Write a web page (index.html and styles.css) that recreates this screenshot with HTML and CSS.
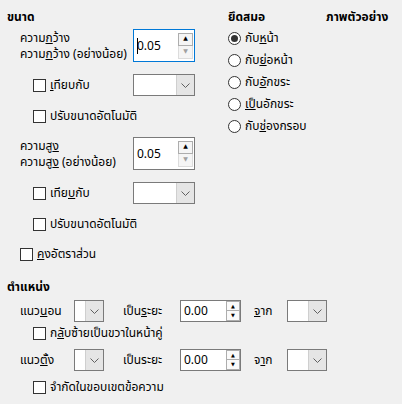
FILE: index.html
```html
<!DOCTYPE html>
<html lang="th">
<head>
<meta charset="utf-8">
<link rel="stylesheet" href="styles.css">
</head>
<body>
<div class="dialog">
  <div class="top">
    <section class="size">
      <h3>ขนาด</h3>
      <div class="field f-first">
        <div class="labels"><div>ความ<u>ก</u>ว้าง</div><div>ความ<u>ก</u>ว้าง (อย่างน้อย)</div></div>
        <div class="spin focus"><span class="caret"></span><span class="val">0.05</span>
          <div class="btns"><span class="up">&#9650;</span><span class="down">&#9660;</span></div>
        </div>
      </div>
      <div class="row indent r-dd1">
        <span class="chk"></span><span class="clabel"><u>เ</u>ทียบกับ</span>
        <div class="dd"><span class="dd-btn"><svg width="9" height="5" viewBox="0 0 9 5"><path d="M0.5 0.5 L4.5 4.5 L8.5 0.5" fill="none" stroke="#606060" stroke-width="1"/></svg></span></div>
      </div>
      <div class="row indent r-auto1"><span class="chk"></span><span>ปรับขนาดอัตโนมัติ</span></div>
      <div class="field f-second">
        <div class="labels"><div>ความสู<u>ง</u></div><div>ความสู<u>ง</u> (อย่างน้อย)</div></div>
        <div class="spin"><span class="val">0.05</span>
          <div class="btns"><span class="up">&#9650;</span><span class="down">&#9660;</span></div>
        </div>
      </div>
      <div class="row indent r-dd2">
        <span class="chk"></span><span class="clabel">เทีย<u>บ</u>กับ</span>
        <div class="dd"><span class="dd-btn"><svg width="9" height="5" viewBox="0 0 9 5"><path d="M0.5 0.5 L4.5 4.5 L8.5 0.5" fill="none" stroke="#606060" stroke-width="1"/></svg></span></div>
      </div>
      <div class="row indent r-auto2"><span class="chk"></span><span>ปรับขนาดอัตโนมัติ</span></div>
      <div class="row half r-keep"><span class="chk"></span><span><u>ค</u>งอัตราส่วน</span></div>
    </section>
    <section class="anchor">
      <h3>ยึดสมอ</h3>
      <div class="radios">
        <div class="row"><span class="radio on"></span><span>กับ<u>ห</u>น้า</span></div>
        <div class="row"><span class="radio"></span><span>กับ<u>ย่</u>อหน้า</span></div>
        <div class="row"><span class="radio"></span><span>กับ<u>อั</u>กขระ</span></div>
        <div class="row"><span class="radio"></span><span><u>เป็</u>นอักขระ</span></div>
        <div class="row"><span class="radio"></span><span>กับ<u>ช่</u>องกรอบ</span></div>
      </div>
    </section>
    <section class="preview">
      <h3>ภาพตัวอย่าง</h3>
    </section>
  </div>
  <section class="position">
    <h3>ตำแหน่ง</h3>
    <div class="prow p-h">
      <span class="plabel">แนว<u>น</u>อน</span>
      <div class="dd small"><span class="dd-btn"><svg width="9" height="5" viewBox="0 0 9 5"><path d="M0.5 0.5 L4.5 4.5 L8.5 0.5" fill="none" stroke="#606060" stroke-width="1"/></svg></span></div>
      <span class="dist">เป็น<u>ร</u>ะยะ</span>
      <div class="spin small"><span class="val">0.00</span>
        <div class="btns"><span class="up">&#9650;</span><span class="down">&#9660;</span></div>
      </div>
      <span class="from"><u>จ</u>าก</span>
      <div class="dd from-dd"><span class="dd-btn"><svg width="9" height="5" viewBox="0 0 9 5"><path d="M0.5 0.5 L4.5 4.5 L8.5 0.5" fill="none" stroke="#606060" stroke-width="1"/></svg></span></div>
    </div>
    <div class="row indent p-mirror"><span class="chk"></span><span>ก<u>ลั</u>บซ้ายเป็นขวาในหน้าคู่</span></div>
    <div class="prow p-v">
      <span class="plabel">แนว<u>ตั้</u>ง</span>
      <div class="dd small"><span class="dd-btn"><svg width="9" height="5" viewBox="0 0 9 5"><path d="M0.5 0.5 L4.5 4.5 L8.5 0.5" fill="none" stroke="#606060" stroke-width="1"/></svg></span></div>
      <span class="dist">เป็นระยะ</span>
      <div class="spin small"><span class="val">0.00</span>
        <div class="btns"><span class="up">&#9650;</span><span class="down">&#9660;</span></div>
      </div>
      <span class="from">จ<u>า</u>ก</span>
      <div class="dd from-dd"><span class="dd-btn"><svg width="9" height="5" viewBox="0 0 9 5"><path d="M0.5 0.5 L4.5 4.5 L8.5 0.5" fill="none" stroke="#606060" stroke-width="1"/></svg></span></div>
    </div>
    <div class="row indent p-limit"><span class="chk"></span><span>จำกัดในขอบเขตข้อความ</span></div>
  </section>
</div>
</body>
</html>
```

FILE: styles.css
```css
html, body {
  margin: 0;
  padding: 0;
}
body {
  background: #f0f0f0;
  color: #000;
  font-family: Tahoma, "Noto Sans Thai", "Noto Sans", "DejaVu Sans", sans-serif;
  font-size: 12px;
  width: 402px;
  height: 404px;
  overflow: hidden;
}
.dialog {
  padding: 9px 0 0 7px;
}
.top {
  display: flex;
}
.size {
  width: 221px;
  flex: none;
}
.anchor {
  width: 98px;
  flex: none;
}
h3 {
  margin: 0;
  font-size: 12px;
  font-weight: bold;
  line-height: 16px;
  height: 16px;
  white-space: nowrap;
}
u {
  text-decoration-thickness: 1px;
}
.field {
  display: flex;
  align-items: center;
  height: 33px;
}
.f-first { margin-top: 4px; }
.f-second { margin-top: 10px; }
.labels {
  margin-left: 13px;
  width: 113px;
  line-height: 16px;
  white-space: nowrap;
}
.row {
  display: flex;
  align-items: center;
  height: 22px;
  white-space: nowrap;
}
.indent { padding-left: 26px; }
.half { padding-left: 13px; }
.r-dd1 { margin-top: 12px; }
.r-auto1 { margin-top: 9px; }
.r-dd2 { margin-top: 12px; }
.r-auto2 { margin-top: 9px; }
.r-keep { margin-top: 8px; }

.chk {
  width: 13px;
  height: 13px;
  box-sizing: border-box;
  border: 1px solid #333;
  background: #fff;
  margin-right: 4px;
  flex: none;
}
.clabel {
  width: 83px;
  flex: none;
}
.radio {
  width: 13px;
  height: 13px;
  box-sizing: border-box;
  border: 1px solid #333;
  border-radius: 50%;
  background: #fff;
  margin-right: 4px;
  flex: none;
  display: flex;
  align-items: center;
  justify-content: center;
}
.radio.on::after {
  content: "";
  width: 7px;
  height: 7px;
  border-radius: 50%;
  background: #333;
}
.radios { margin-top: 2px; }

.spin {
  position: relative;
  display: flex;
  align-items: center;
  width: 62px;
  height: 33px;
  box-sizing: border-box;
  border: 1px solid #7a7a7a;
  background: #fff;
  padding-left: 3px;
  flex: none;
}
.spin.focus {
  border-color: #0078d7;
}
.caret {
  position: absolute;
  left: 3px;
  top: 8px;
  width: 1px;
  height: 16px;
  background: #000;
}
.val {
  flex: 1;
}
.btns {
  display: flex;
  flex-direction: column;
  margin-right: 1px;
}
.btns span {
  width: 15px;
  height: 13px;
  box-sizing: border-box;
  display: flex;
  align-items: center;
  justify-content: center;
  font-size: 6px;
  line-height: 1;
}
.btns .up {
  border: 1px solid #adadad;
  background: #f5f5f5;
  color: #000;
}
.btns .down {
  border: 1px solid #dcdcdc;
  border-top: none;
  background: #f5f5f5;
  color: #a0a0a0;
}
.spin.small {
  width: 61px;
  height: 22px;
}
.spin.small .btns {
  border: 1px solid #adadad;
  margin-right: 0;
}
.spin.small .btns span {
  width: 12px;
  height: 9px;
  border: none;
  background: #fafafa;
  color: #000;
  font-size: 5px;
}
.spin.small .btns .up {
  border-bottom: 1px solid #adadad;
  height: 9px;
}

.dd {
  display: flex;
  justify-content: flex-end;
  width: 62px;
  height: 22px;
  box-sizing: border-box;
  border: 1px solid #7a7a7a;
  background: #fff;
  flex: none;
}
.dd-btn {
  width: 17px;
  background: #e5e5e5;
  border-left: 1px solid #cfcfcf;
  display: flex;
  align-items: center;
  justify-content: center;
}
.dd.small { width: 30px; }
.dd.from-dd { width: 40px; }

.position {
  margin-top: 14px;
}
.prow {
  display: flex;
  align-items: center;
  height: 22px;
  white-space: nowrap;
}
.p-h { margin-top: 5px; }
.p-v { margin-top: 5px; }
.p-limit { margin-top: 5px; }
.plabel {
  margin-left: 13px;
  width: 54px;
  flex: none;
}
.dist {
  margin-left: 19px;
  width: 57px;
  flex: none;
}
.from {
  margin-left: 13px;
  width: 33px;
  flex: none;
}
```
